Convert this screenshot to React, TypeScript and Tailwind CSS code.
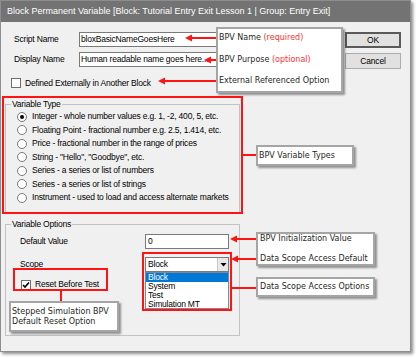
import type { ReactNode } from 'react';

const variableTypes = [
  'Integer - whole number values e.g. 1, -2, 400, 5, etc.',
  'Floating Point - fractional number e.g. 2.5, 1.414, etc.',
  'Price - fractional number in the range of prices',
  'String - "Hello", "Goodbye", etc.',
  'Series - a series or list of numbers',
  'Series - a series or list of strings',
  'Instrument - used to load and access alternate markets',
];

const scopeOptions = ['Block', 'System', 'Test', 'Simulation MT'];

function Radio({ checked }: { checked?: boolean }) {
  return (
    <span className="flex h-[10px] w-[10px] shrink-0 items-center justify-center rounded-full border border-[#7a7a7a] bg-white">
      {checked ? <span className="h-[4px] w-[4px] rounded-full bg-black" /> : null}
    </span>
  );
}

function CheckBox({ checked }: { checked?: boolean }) {
  return (
    <span className="flex h-[10px] w-[10px] shrink-0 items-center justify-center border border-[#6e6e6e] bg-white">
      {checked ? (
        <svg width="8" height="8" viewBox="0 0 8 8">
          <path d="M1 4 L3 6 L7 1.5" fill="none" stroke="#000" strokeWidth="1.6" />
        </svg>
      ) : null}
    </span>
  );
}

function Callout({ className, children }: { className: string; children: ReactNode }) {
  return (
    <div
      className={`absolute border-2 border-[#a5a5a5] bg-white font-['DejaVu_Sans',sans-serif] text-[8px] leading-[10px] tracking-normal text-[#1f1f1f] shadow-[2px_2px_2px_rgba(0,0,0,0.4)] ${className}`}
    >
      {children}
    </div>
  );
}

function Arrows() {
  const red = '#ff1414';
  return (
    <svg className="pointer-events-none absolute left-0 top-0" width={418} height={359}>
      <g stroke={red} strokeWidth={2}>
        <line x1={190} y1={38} x2={216} y2={38} />
        <line x1={210} y1={60} x2={216} y2={60} />
        <line x1={163} y1={81} x2={216} y2={81} />
        <line x1={243} y1={155} x2={256} y2={155} />
        <line x1={235} y1={239} x2={256} y2={239} />
        <line x1={236} y1={259} x2={256} y2={259} />
        <line x1={232} y1={288} x2={256} y2={288} />
        <line x1={61} y1={291} x2={61} y2={301} />
      </g>
      <g fill={red}>
        <polygon points="185,38 192,34.5 192,41.5" />
        <polygon points="204,60 211,56.5 211,63.5" />
        <polygon points="158,81 165,77.5 165,84.5" />
        <polygon points="230,239 237,235.5 237,242.5" />
        <polygon points="231,259 238,255.5 238,262.5" />
      </g>
    </svg>
  );
}

export default function App() {
  return (
    <div className="relative h-[359px] w-[418px] overflow-hidden bg-white font-['Liberation_Sans',Arial,sans-serif] text-[8.5px] tracking-[-0.2px] text-black">
      <div className="flex h-[352px] w-[411px] flex-col border border-[#8e8e8e] bg-[#f0f0f0] shadow-[2px_2px_3px_rgba(0,0,0,0.45)]">
        <div className="flex h-[21px] shrink-0 items-center bg-[#737373] pl-[6px] text-[9px] tracking-normal text-white">
          Block Permanent Variable [Block: Tutorial Entry Exit Lesson 1 | Group: Entry Exit]
        </div>

        <div className="flex flex-1">
          <div className="w-[300px] pt-[10px]">
            <div className="flex h-[15px] items-center">
              <span className="w-[78px] pl-[13px]">Script Name</span>
              <div className="flex h-[15px] w-[140px] items-center border border-[#7a7a7a] bg-white px-[1px]">
                bloxBasicNameGoesHere
              </div>
            </div>
            <div className="mt-[5px] flex h-[15px] items-center">
              <span className="w-[78px] pl-[13px]">Display Name</span>
              <div className="flex h-[15px] w-[140px] items-center border border-[#7a7a7a] bg-white px-[1px]">
                Human readable name goes here...
              </div>
            </div>
            <label className="mt-[10px] flex items-center gap-[4px] pl-[10px]">
              <CheckBox />
              <span>Defined Externally in Another Block</span>
            </label>

            <fieldset className="ml-[4px] mt-[9px] w-[235px] border border-[#c3c3c3]">
              <legend className="ml-[5px] px-[1px] leading-[11px]">Variable Type</legend>
              <div className="pb-[8px] pl-[11px]">
                {variableTypes.map((label, index) => (
                  <div key={label} className="flex h-[13.5px] items-center gap-[5px] whitespace-nowrap">
                    <Radio checked={index === 0} />
                    <span>{label}</span>
                  </div>
                ))}
              </div>
            </fieldset>

            <fieldset className="ml-[4px] mt-[6px] w-[235px] border border-[#c3c3c3]">
              <legend className="ml-[5px] px-[1px] leading-[11px]">Variable Options</legend>
              <div className="flex pb-[26px] pt-[4px]">
                <div className="flex w-[139px] flex-col pl-[14px]">
                  <div className="flex h-[15px] items-center">Default Value</div>
                  <div className="mt-[8px] flex h-[15px] items-center">Scope</div>
                  <label className="mt-[6px] flex items-center gap-[4px] pl-[1px]">
                    <CheckBox checked />
                    <span>Reset Before Test</span>
                  </label>
                </div>
                <div className="flex w-[84px] flex-col">
                  <div className="flex h-[15px] items-center border border-[#7a7a7a] bg-white px-[2px]">0</div>
                  <div className="mt-[8px] flex h-[15px] items-center border border-[#7a7a7a] bg-white pl-[2px]">
                    <span className="flex-1">Block</span>
                    <span className="flex h-full w-[11px] items-center justify-center border-l border-[#c8c8c8] bg-[#e8e8e8]">
                      <svg width="7" height="6" viewBox="0 0 7 6">
                        <path d="M0.5 1 L6.5 1 L3.5 4.5 Z" fill="#000" />
                      </svg>
                    </span>
                  </div>
                  <div className="flex h-[37px] flex-col border border-[#828790] bg-white">
                    {scopeOptions.map((option, index) => (
                      <div
                        key={option}
                        className={
                          index === 0
                            ? 'h-[9px] bg-[#0078d7] px-[2px] leading-[9px] text-white'
                            : 'h-[9px] px-[2px] leading-[9px]'
                        }
                      >
                        {option}
                      </div>
                    ))}
                  </div>
                </div>
              </div>
            </fieldset>
          </div>

          <div className="ml-auto mr-[9px] flex w-[56px] flex-col gap-[5px] pt-[10px]">
            <button
              type="button"
              className="h-[16px] border-2 border-[#5a5a5a] bg-[#e1e1e1] text-center leading-[12px]"
            >
              OK
            </button>
            <button
              type="button"
              className="h-[16px] border border-[#adadad] bg-[#e1e1e1] text-center leading-[14px]"
            >
              Cancel
            </button>
          </div>
        </div>
      </div>

      {/* annotation overlays */}
      <div className="pointer-events-none absolute left-[2px] top-[96px] h-[118px] w-[241px] border-2 border-[#ff1414]" />
      <div className="pointer-events-none absolute left-[142px] top-[252px] h-[59px] w-[90px] border-2 border-[#ff1414]" />
      <div className="pointer-events-none absolute left-[13px] top-[268px] h-[23px] w-[95px] border-2 border-[#ff1414]" />
      <Arrows />

      <Callout className="left-[216px] top-[27px] flex h-[66px] w-[127px] flex-col gap-[11.5px] pl-[1px] pt-[4px]">
        <span>
          BPV Name <span className="text-[#ff3030]">(required)</span>
        </span>
        <span>
          BPV Purpose <span className="text-[#ff3030]">(optional)</span>
        </span>
        <span>External Referenced Option</span>
      </Callout>
      <Callout className="left-[256px] top-[145px] flex h-[21px] w-[98px] items-center pl-[1px]">
        BPV Variable Types
      </Callout>
      <Callout className="left-[256px] top-[232px] flex h-[34px] w-[119px] flex-col gap-[10px] pl-[2px] pt-[0px]">
        <span>BPV Initialization Value</span>
        <span>Data Scope Access Default</span>
      </Callout>
      <Callout className="left-[256px] top-[277px] flex h-[20px] w-[119px] items-center pl-[2px]">
        Data Scope Access Options
      </Callout>
      <Callout className="left-[9px] top-[301px] flex h-[31px] w-[110px] flex-col justify-center pl-[1px]">
        <span>Stepped Simulation BPV</span>
        <span>Default Reset Option</span>
      </Callout>
    </div>
  );
}
